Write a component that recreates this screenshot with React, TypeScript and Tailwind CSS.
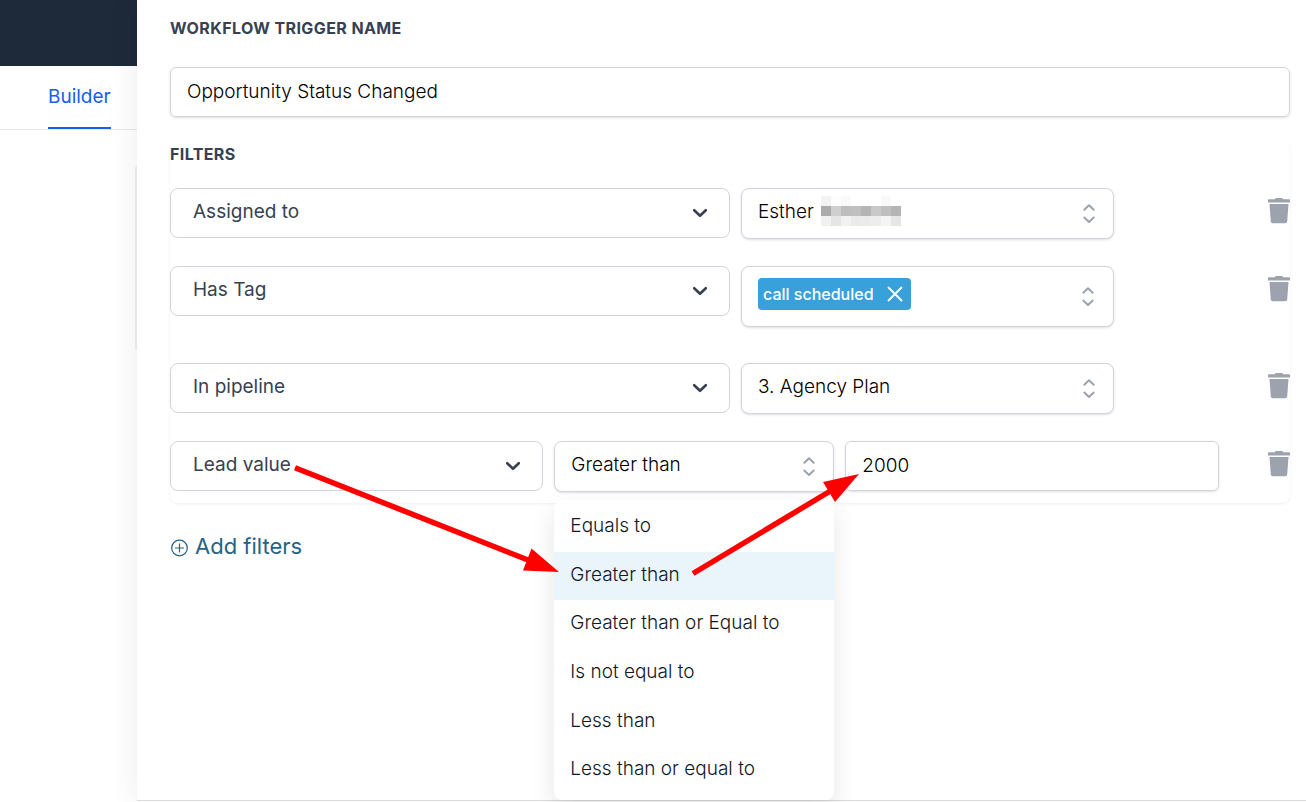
import React, { useState } from 'react';
import { X } from 'lucide-react';

const operators = [
  'Equals to',
  'Greater than',
  'Greater than or Equal to',
  'Is not equal to',
  'Less than',
  'Less than or equal to',
];

const filterFields = ['Assigned to', 'Has Tag', 'In pipeline', 'Lead value'];

// Grey levels of the pixelated surname, 8 cells per line
const maskedName = [
  ['#f3f3f3', '#fdfdfd', '#f9f9f9', '#ffffff', '#ffffff', '#ffffff', '#f9f9f9', '#ffffff'],
  ['#ababab', '#cfcfcf', '#bebebe', '#bfbfbf', '#b5b5b5', '#c9c9c9', '#bfbfbf', '#b5b5b5'],
  ['#f1f1f1', '#e5e5e5', '#f2f2f2', '#eaeaea', '#ebebeb', '#ededed', '#f4f4f4', '#e6e6e6'],
];

const ChevronDown = () => (
  <svg
    className="pointer-events-none absolute inset-y-0 right-[23px] my-auto h-3 w-3.5"
    viewBox="0 0 14 12"
    fill="none"
    stroke="#374151"
    strokeWidth={2.6}
    strokeLinecap="round"
    strokeLinejoin="round"
  >
    <path d="M1.2 3.2L7 8.8l5.8-5.6" />
  </svg>
);

const Selector = () => (
  <svg
    className="pointer-events-none absolute inset-y-0 right-[13px] my-auto h-6 w-6"
    viewBox="0 0 24 24"
    fill="none"
    stroke="#9ca3af"
    strokeWidth={2}
    strokeLinecap="round"
    strokeLinejoin="round"
  >
    <path d="M7.300 7.700L12 3.200l4.700 4.500M7.300 15.500L12 20l4.700-4.500" />
  </svg>
);

interface FieldSelectProps {
  value: string;
  className: string;
}

const FieldSelect: React.FC<FieldSelectProps> = ({ value, className }) => (
  <div className={`relative h-[50px] shrink-0 ${className}`}>
    <select
      aria-label="Filter field"
      defaultValue={value}
      className="h-full w-full appearance-none rounded-lg border border-[#d1d5db] bg-white pb-0.5 pl-[22px] text-[19px] text-[#374151]"
    >
      {filterFields.map((field) => (
        <option key={field}>{field}</option>
      ))}
    </select>
    <ChevronDown />
  </div>
);

interface ValueSelectProps {
  label: string;
  value: string;
  children?: React.ReactNode;
}

const ValueSelect: React.FC<ValueSelectProps> = ({ label, value, children }) => (
  <div className="relative h-[51px] w-1/3 shrink-0">
    <select
      aria-label={label}
      defaultValue={value}
      className="h-full w-full appearance-none rounded-lg border border-[#d1d5db] bg-white pb-0.5 pl-4 text-[19px] font-light text-black shadow-sm"
    >
      <option>{value}</option>
    </select>
    {children}
    <Selector />
  </div>
);

const DeleteButton = () => (
  <button type="button" aria-label="Delete filter" className="mt-2.5 ml-auto h-[26px] shrink-0">
    <svg className="h-[26px] w-[22px]" viewBox="0 0 22 26" fill="#9ca3af">
      <path d="M7 1.2Q7 0 8.2 0h5.6Q15 0 15 1.2h6.2q.8 0 .8.8v1.9q0 .6-.6.6H.6Q0 4.500 0 3.900V2q0-.8.8-.8z" />
      <path d="M1.500 6h19l-1.300 17.500q-.2 1.700-1.900 1.700H4.700q-1.700 0-1.900-1.700z" />
    </svg>
  </button>
);

export default function App() {
  const [operator, setOperator] = useState('Greater than');

  return (
    <div className="flex min-h-screen overflow-hidden bg-white font-['Inter',sans-serif]">
      <aside className="w-[137px] shrink-0">
        <div className="h-[66px] bg-[#1e293a]" />
        <nav className="flex h-16 border-b border-[#e5e7eb] pl-12">
          <a
            href="#builder"
            className="h-[63px] border-b-2 border-[#155eef] pt-[17px] text-[19px] leading-7 text-[#155eef]"
          >
            Builder
          </a>
        </nav>
        <div className="mt-9 ml-auto h-[184px] w-0.5 rounded-l-sm bg-[#f0f0f1]" />
      </aside>

      <main className="relative flex min-w-0 flex-1 flex-col bg-white shadow-[0_0_30px_rgba(0,0,0,0.08)]">
        <form className="flex-1 pt-[17px] pr-4 pl-[33px]">
          <label
            htmlFor="trigger-name"
            className="block text-base leading-[22px] font-bold tracking-wide text-[#374151]"
          >
            WORKFLOW TRIGGER NAME
          </label>
          <input
            id="trigger-name"
            type="text"
            defaultValue="Opportunity Status Changed"
            className="mt-7 block h-[50px] w-full rounded-md border border-[#d1d5db] px-4 pb-0.5 text-[19px] font-light text-black shadow-sm"
          />

          <section className="mt-[26px] rounded-lg pb-[11px] shadow-[0_1px_3px_rgba(0,0,0,0.07)]">
            <h2 className="text-base leading-[22px] font-bold tracking-wide text-[#374151]">FILTERS</h2>

            <div className="mt-[23px] flex flex-col gap-[27px]">
              <div className="flex gap-[11px]">
                <FieldSelect value="Assigned to" className="w-1/2" />
                <ValueSelect label="Assignee" value="Esther">
                  <svg
                    className="pointer-events-none absolute top-2 left-20 h-[30px] w-20"
                    viewBox="0 0 80 30"
                    shapeRendering="crispEdges"
                  >
                    {maskedName.map((line, y) =>
                      line.map((fill, x) => (
                        <rect key={`${x}-${y}`} x={x * 10} y={y * 10} width={10} height={10} fill={fill} />
                      ))
                    )}
                  </svg>
                </ValueSelect>
                <DeleteButton />
              </div>

              <div className="flex gap-[11px] pb-[9px]">
                <FieldSelect value="Has Tag" className="w-1/2" />
                <div className="relative h-[61px] w-1/3 shrink-0 rounded-lg border border-[#d1d5db] bg-white py-[11px] pl-4 shadow-sm">
                  <span className="inline-flex h-8 items-center gap-2 rounded bg-[#38a0db] pr-[3px] pl-[5px] text-base font-medium text-white">
                    call scheduled
                    <button type="button" aria-label="Remove tag">
                      <X className="h-[26px] w-[26px]" strokeWidth={1.7} />
                    </button>
                  </span>
                  <Selector />
                </div>
                <DeleteButton />
              </div>

              <div className="flex gap-[11px]">
                <FieldSelect value="In pipeline" className="w-1/2" />
                <ValueSelect label="Pipeline" value="3. Agency Plan" />
                <DeleteButton />
              </div>

              <div className="flex gap-[11px]">
                <FieldSelect value="Lead value" className="w-1/3" />
                <div className="relative h-[51px] w-1/4 shrink-0">
                  <button
                    type="button"
                    aria-haspopup="listbox"
                    aria-expanded="true"
                    className="h-full w-full rounded-lg border border-[#d1d5db] bg-white pb-0.5 pl-4 text-left text-[19px] font-light text-black shadow-sm"
                  >
                    {operator}
                  </button>
                  <Selector />
                  <ul
                    role="listbox"
                    aria-label="Operator"
                    className="absolute top-full left-0 z-10 mt-2 flex h-[300px] w-full flex-col rounded-lg bg-white pt-[3px] pb-[5px] shadow-[0_10px_24px_rgba(0,0,0,0.1)]"
                  >
                    {operators.map((item) => (
                      <li
                        key={item}
                        role="option"
                        aria-selected={item === operator}
                        onClick={() => setOperator(item)}
                        className={`flex flex-1 items-center px-4 pb-0.5 text-[19px] font-light text-[#111827] ${
                          item === operator ? 'bg-[#e9f5fb]' : ''
                        }`}
                      >
                        {item}
                      </li>
                    ))}
                  </ul>
                </div>
                <input
                  type="text"
                  aria-label="Lead value amount"
                  defaultValue="2000"
                  className="h-[50px] w-1/3 min-w-0 shrink-0 rounded-md border border-[#d1d5db] px-4 pb-0.5 text-[19px] font-light text-black shadow-sm"
                />
                <DeleteButton />
              </div>
            </div>
          </section>

          <button type="button" className="mt-7 flex items-center gap-[7px] text-[22px] leading-[30px] text-[#246487]">
            <svg className="mt-1 h-[18px] w-[18px]" viewBox="0 0 18 18" fill="none" stroke="currentColor" strokeWidth={1.2}>
              <circle cx="9.500" cy="9" r="7.800" />
              <path d="M9.500 4.500v9M5 9h9" />
            </svg>
            Add filters
          </button>
        </form>
        <footer className="h-0.5 border-t border-[#d9dbdf]" />

        {/* Arrows from the field to the operator and on to the value */}
        <svg
          className="pointer-events-none absolute top-0 left-0 z-20 h-[802px] w-[1169px]"
          viewBox="137 0 1169 802"
          fill="#ff0000"
        >
          <path d="M295 467.800L528 560" stroke="#ff0000" strokeWidth={5.500} />
          <path d="M559 572L531.500 548.500L523 570.500z" />
          <path d="M693 573.500L832 490" stroke="#ff0000" strokeWidth={5.500} />
          <path d="M859 474L823 482L835 502z" />
        </svg>
      </main>
    </div>
  );
}
